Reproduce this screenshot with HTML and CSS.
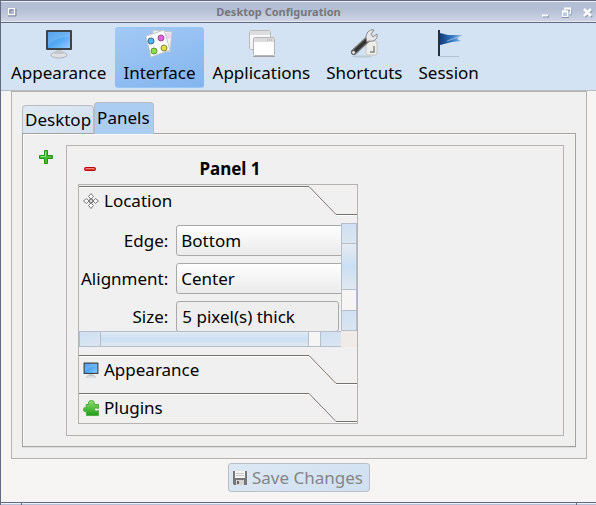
FILE: index.html
```html
<!DOCTYPE html>
<html lang="en">
<head>
<meta charset="utf-8">
<title>Desktop Configuration</title>
<link rel="stylesheet" href="styles.css">
</head>
<body>
<svg class="defs" width="0" height="0" aria-hidden="true">
  <defs>
    <linearGradient id="screen" x1="0" y1="0" x2="1" y2="1"><stop offset="0" stop-color="#3c92e4"/><stop offset=".55" stop-color="#55aaf4"/><stop offset="1" stop-color="#8fd0ff"/></linearGradient>
    <linearGradient id="flag" x1="0" y1="0" x2="1" y2="0"><stop offset="0" stop-color="#123c78"/><stop offset=".5" stop-color="#2f73bd"/><stop offset="1" stop-color="#8fbbe6"/></linearGradient>
    <linearGradient id="green" x1="0" y1="0" x2="0" y2="1"><stop offset="0" stop-color="#8fe070"/><stop offset="1" stop-color="#1f9c18"/></linearGradient>
    <linearGradient id="paper" x1="0" y1="0" x2="0" y2="1"><stop offset="0" stop-color="#fff"/><stop offset="1" stop-color="#ededed"/></linearGradient>
    <symbol id="monitor" viewBox="0 0 32 32">
      <ellipse cx="16" cy="27" rx="8" ry="3" fill="#dfe1e2" stroke="#aeb3b8"/>
      <path d="M13 22h6l1 4h-8z" fill="#c3c8cc"/>
      <rect x="3" y="2" width="26" height="20" rx="1" fill="#3e4347"/>
      <rect x="5" y="4" width="22" height="16" fill="url(#screen)"/>
      <path d="M5 4h22v5Q14 9 5 17z" fill="#fff" opacity=".15"/>
    </symbol>
    <symbol id="slope" viewBox="0 0 48 30">
      <path d="M0 1.5L27 29.5H48" fill="none" stroke="#fff"/>
      <path d="M0 .5L27 28.5H48" fill="none" stroke="#77726d"/>
    </symbol>
  </defs>
</svg>
<div class="window">
  <header class="titlebar">
    <button class="win-btn" aria-label="Window menu"><svg width="10" height="10"><rect x="1.5" y="1.5" width="6" height="6" fill="#aeb8ca" stroke="#fff"/><path d="M1 9h8V2M3 6V3h3" fill="none" stroke="#7c889f"/></svg></button>
    <h1 class="title">Desktop Configuration</h1>
    <div class="win-controls">
      <button class="win-btn" aria-label="Minimize"><svg width="11" height="11"><path d="M3 9.5h6" stroke="#8390a8" stroke-width="2"/><path d="M2 8.500h6" stroke="#fff" stroke-width="2"/></svg></button>
      <button class="win-btn" aria-label="Restore"><svg width="11" height="11"><path d="M4 4V3h6v5H9M1 10.500h7" fill="none" stroke="#8390a8"/><path d="M3.500 3V1.500h6v5H8M1.500 4v5.500h5V4z" fill="none" stroke="#fff"/><path d="M3 1.500h7M1 4.500h6" stroke="#fff" stroke-width="2"/></svg></button>
      <button class="win-btn" aria-label="Close"><svg width="11" height="11"><path d="M3 3l7 7M10 3l-7 7" stroke="#8390a8" stroke-width="2"/><path d="M2 2l7 7M9 2L2 9" stroke="#fff" stroke-width="2.500"/></svg></button>
    </div>
  </header>
  <nav class="toolbar">
    <button class="tool"><svg class="tool-icon"><use href="#monitor"/></svg>Appearance</button>
    <button class="tool active" aria-pressed="true"><svg class="tool-icon" viewBox="0 0 32 32">
      <path d="M10 2l19 2-2 20-17-2z" fill="#f2f2f2" stroke="#c2c6cc"/>
      <circle cx="25" cy="8" r="3" fill="#f0d2ee"/>
      <path d="M3 8L21 2l6 20L8 29z" fill="#fcfcfc" stroke="#c4c8cc"/>
      <circle cx="8" cy="13" r="3" fill="#47b8ee" stroke="#43678f"/><circle cx="18" cy="10" r="3" fill="#e85be3" stroke="#96518e"/>
      <circle cx="11" cy="23" r="3" fill="#8ce048" stroke="#5d9537"/><circle cx="21" cy="20" r="3" fill="#dedd42" stroke="#898843"/>
    </svg>Interface</button>
    <button class="tool"><svg class="tool-icon" viewBox="0 0 32 32">
      <rect x="4.500" y="2.500" width="21" height="19" rx="1" fill="url(#paper)" stroke="#bbb"/><rect x="5" y="3" width="20" height="4" fill="#ddd"/>
      <rect x="8.500" y="9.500" width="21" height="18" rx="1" fill="#fff" stroke="#b5b5b5"/><rect x="9" y="10" width="20" height="4" fill="#dcdcdc"/><path d="M22 12h5" stroke="#999" stroke-dasharray="1 1"/><path d="M8 28.500h22" stroke="#a4a4a4"/>
    </svg>Applications</button>
    <button class="tool"><svg class="tool-icon" viewBox="0 0 32 32">
      <ellipse cx="14" cy="28.500" rx="10" ry="1" fill="#bcc8d4"/>
      <rect x="18" y="13" width="11" height="14" rx="1" fill="#ededea" stroke="#c4c4c0"/><path d="M26 18v6h-4" fill="none" stroke="#888" stroke-width="1.500"/>
      <path d="M6 24L20 11" stroke="#777" stroke-width="6" stroke-linecap="round"/><path d="M6 24L20 11" stroke="#333" stroke-width="3.500" stroke-linecap="round"/>
      <circle cx="5.500" cy="24.500" r="2" fill="#ddd" stroke="#555"/>
      <path d="M18 10c0-5 3-9 8-8l-3 4 2 3 4-3c1 5-3 8-8 7l-2 1z" fill="#e8e8e8" stroke="#888"/>
    </svg>Shortcuts</button>
    <button class="tool"><svg class="tool-icon" viewBox="0 0 32 32">
      <path d="M6 28.500h20" stroke="#b3c3d1"/>
      <path d="M7 5l8 2 14 0-5 4 4 2-9 1-12 3z" fill="url(#flag)"/><path d="M14 13l14-5" stroke="#c6def5" opacity=".6"/>
      <path d="M6 2v26" stroke="#263038" stroke-width="2"/>
    </svg>Session</button>
  </nav>
  <main class="body">
    <section class="page">
      <div class="tabs" role="tablist">
        <button class="tab" role="tab" aria-selected="false">Desktop</button>
        <button class="tab selected" role="tab" aria-selected="true">Panels</button>
      </div>
      <div class="pane" role="tabpanel">
        <button class="mini" aria-label="Add panel"><svg width="16" height="16" viewBox="0 0 16 16"><path d="M6.500 1.500h3v5h5v3h-5v5h-3v-5h-5v-3h5z" fill="#45bd2e" stroke="#209519" stroke-linejoin="round"/><path d="M7.500 2.500v5h-5" fill="none" stroke="#94e479"/></svg></button>
        <div class="panels">
          <article class="panel">
            <div class="panel-head">
              <button class="mini" aria-label="Remove panel"><svg width="16" height="16" viewBox="0 0 16 16"><rect x="2.500" y="6.500" width="11" height="3" rx="1" fill="#de3939" stroke="#b80b0b"/><path d="M4 7.500h8" stroke="#f08080"/></svg></button>
              <h2 class="panel-title">Panel 1</h2>
            </div>
            <div class="shelves">
              <button class="shelf"><span class="shelf-name"><svg width="16" height="16" viewBox="0 0 16 16"><path d="M8 .5l2.500 3L8 6 5.500 3.500zM8 15.500l2.500-3L8 10l-2.500 2.500zM.5 8l3-2.500L6 8l-2.500 2.500zM15.500 8l-3-2.500L10 8l2.500 2.500z" fill="#fff" stroke="#77797a"/><rect x="6.500" y="6.500" width="3" height="3" fill="#ddd" stroke="#888"/></svg>Location</span><svg class="slope"><use href="#slope"/></svg></button>
              <div class="scroll">
                <form class="fields">
                  <label for="edge">Edge:</label><select id="edge" class="field"><option>Bottom</option><option>Top</option></select>
                  <label for="align">Alignment:</label><select id="align" class="field"><option>Center</option><option>Left</option></select>
                  <label for="size">Size:</label><button id="size" type="button" class="field size">5 pixel(s) thick</button>
                </form>
                <div class="bar vertical"><button class="step" aria-label="Scroll up"></button><div class="thumb"></div><div class="trough"></div><button class="step" aria-label="Scroll down"></button></div>
                <div class="bar horizontal"><button class="step" aria-label="Scroll left"></button><div class="thumb"></div><div class="trough"></div><button class="step" aria-label="Scroll right"></button></div>
                <div class="corner"></div>
              </div>
              <button class="shelf"><span class="shelf-name"><svg width="16" height="16" viewBox="2 1 28 28"><use href="#monitor" width="32" height="32"/></svg>Appearance</span><svg class="slope"><use href="#slope"/></svg></button>
              <button class="shelf"><span class="shelf-name"><svg width="16" height="16" viewBox="0 0 16 16"><path d="M3 4.500h3C4.500 2 6.500.5 8.500.5S12 2 11 4.500h4.500v4c-2.500-1-4-.5-4 1s2 2 4 1v5H3.500v-4C1.500 12.500.5 11 .5 9.500s1-3 3-1.500z" fill="url(#green)" stroke="#4fae3d"/></svg>Plugins</span><svg class="slope"><use href="#slope"/></svg></button>
            </div>
          </article>
        </div>
      </div>
    </section>
    <button class="save" disabled><svg width="16" height="16" viewBox="0 0 16 16"><path d="M1 1h14v14H2l-1-1z" fill="#77777a"/><rect x="3" y="1" width="10" height="7" fill="#f4f4f2"/><path d="M4 3.500h8M4 5.500h8" stroke="#c6c6c4"/><rect x="4" y="10" width="8" height="5" fill="#d4d4d2"/><rect x="5" y="11" width="2" height="3" fill="#66666a"/></svg>Save Changes</button>
  </main>
  <footer class="grip"></footer>
</div>
</body>
</html>
```
FILE: styles.css
```css
* { box-sizing: border-box; }
body { margin: 0; font: 17px/24px "Noto Sans", sans-serif; color: #000; }
button, select { font: inherit; color: inherit; margin: 0; padding: 0; border: 0; background: none; }
svg { display: block; flex: none; }
.defs { position: absolute; }
.window { min-height: 100vh; display: flex; flex-direction: column; background: #f7f5f3; border-left: 1px solid #626a80; }

.titlebar { display: flex; align-items: center; height: 23px; padding: 1px 3px 0 6px; border-top: 1px solid #626a80; border-bottom: 1px solid #626a80; box-shadow: inset 0 1px #eef1f7, inset 0 -1px #e4e9f2; background: linear-gradient(#b4bfd6 40%, #d0d7e5); }
.title { flex: 1; margin: 0; font-size: 11px; line-height: 16px; text-align: center; color: #77777b; }
.win-controls { display: flex; gap: 10px; }

.toolbar { display: flex; gap: 2px; height: 68px; padding: 4px 3px 2px; background: #d3e3f3; border-bottom: 1px solid #b7bcc2; }
.tool { display: flex; flex-direction: column; align-items: center; justify-content: flex-start; gap: 1px; padding: 0 7px; border: 1px solid transparent; border-width: 1px 0; border-radius: 3px; }
.tool-icon { width: 32px; height: 32px; }
.active { padding: 0 8px; border-color: #9bc5f2; background: linear-gradient(160deg, #a2c9f4, #83b5f0); }

.body { flex: 1; display: flex; flex-direction: column; align-items: center; gap: 4px; padding: 0 9px 0 10px; }
.page { align-self: stretch; padding: 10px 10px 11px; background: #f0f0f0; border: 1px solid #b5b2af; }
.tabs { display: flex; align-items: flex-end; }
.tab { height: 28px; padding: 1px 2px 0; border: 1px solid #b5bcc4; border-bottom: 0; border-radius: 4px 4px 0 0; background: linear-gradient(160deg, #e0e9f2, #cfdff0); }
.tab.selected { height: 32px; margin-bottom: -1px; z-index: 1; background: #abcdf2; padding: 0 3px 1px 2px; }
.pane { display: flex; align-items: flex-start; gap: 8px; padding: 11px 11px 10px; border: 1px solid #a5a39f; box-shadow: inset 1px 1px #fbfaf9, 0 1px #ddd; }
.mini { padding: 4px; }
.panels { flex: 1; padding: 11px; border: 1px solid #b5b2af; }
.panel { width: 280px; }
.panel-head { display: flex; align-items: center; height: 27px; padding-bottom: 3px; }
.panel-head .mini { flex: none; }
.panel-title { flex: 1; margin: 0; font-size: 17px; line-height: 24px; text-align: center; }

.shelves { padding-top: 1px; border: 1px solid #b5b2af; }
.shelf { display: flex; align-items: flex-start; width: 100%; height: 30px; text-align: left; }
.shelf + .shelf { margin-top: 8px; }
.shelf-name { flex: 1; display: flex; align-items: center; gap: 5px; height: 28px; padding-left: 4px; border-top: 1px solid #77726d; box-shadow: inset 0 1px #fff; }
.slope { width: 48px; height: 30px; }

.scroll { display: grid; grid-template: 108px 16px / 1fr 16px; margin: 7px 0 8px; }
.fields { display: grid; grid-template-columns: auto 220px; grid-auto-rows: 31px; gap: 7px 8px; align-content: start; align-items: center; padding: 2px 0 0 2px; overflow: hidden; min-width: 0; }
.fields label { text-align: right; }
.field { height: 31px; padding: 0 4px; text-align: left; appearance: none; border: 1px solid #aaa9a8; border-radius: 3px; background: linear-gradient(#fefefe, #ebebeb); }
.size { justify-self: start; width: 163px; padding: 0 5px; background: #eee; }
.bar { display: flex; background: #f7f5f3; border: 1px solid #b6bfc9; }
.vertical { flex-direction: column; }
.horizontal { margin-right: -1px; }
.thumb { border: 0 solid #b6bfc9; }
.vertical .thumb { height: 47px; border-width: 1px 0; background: linear-gradient(#e4ebf2, #cbdff3 50%, #e0e9f2); }
.horizontal .thumb { flex: 1; border-width: 0 1px; background: linear-gradient(#e0eaf3, #cbdff3 50%, #e0e9f2); }
.vertical .trough { flex: 1; }
.horizontal .trough { width: 12px; }
.step { flex: none; width: 20px; height: 14px; background: linear-gradient(160deg, #cfe0f2, #dbe6f1); }
.vertical .step { width: 14px; height: 19px; }
.vertical .step:last-child, .horizontal .step:last-child { box-shadow: 0 0 0 1px #b6bfc9; }
.corner { background: #f0ebe6; }

.save { display: flex; align-items: center; gap: 4px; height: 29px; padding: 1px 6px 0 3px; border: 1px solid #b8bfc7; border-radius: 3px; color: #858585; background: linear-gradient(160deg, #dde8f3, #cfe0f2); }
.grip { height: 3px; border-top: 1px solid #626a80; background: linear-gradient(#eef1f7 50%, #b4bfd6 50%); position: relative; }
.grip::before, .grip::after { content: ""; position: absolute; top: 0; width: 1px; height: 2px; background: #626a80; }
.grip::before { left: 20px; }
.grip::after { right: 19px; }
```
